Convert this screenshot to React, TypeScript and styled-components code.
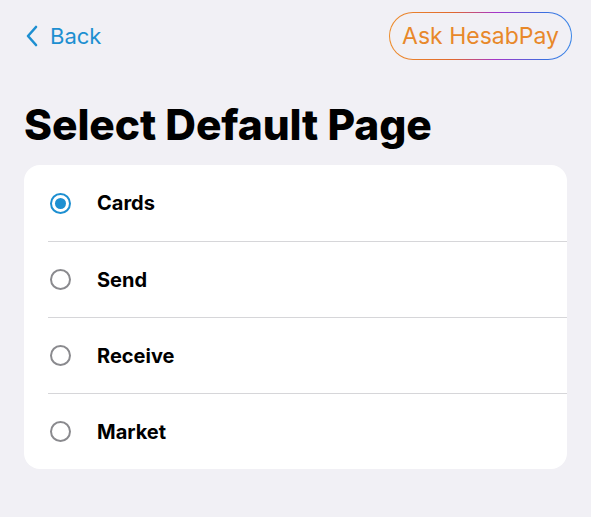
import styled, { createGlobalStyle } from 'styled-components'

const GlobalStyle = createGlobalStyle`
  html, body {
    margin: 0;
    padding: 0;
    background: #f1f0f5;
  }
  body {
    font-family: Inter, 'Liberation Sans', Arial, sans-serif;
  }
`

const options = ['Cards', 'Send', 'Receive', 'Market']

const App: React.FC = () => {
  const selected = 'Cards'

  return (
    <>
      <GlobalStyle />
      <Page>
        <TopBar>
          <BackButton>
            <svg width="14" height="22" viewBox="0 0 14 22" fill="none">
              <path d="M11 2 L3 11 L11 20" stroke="#1d8fd1" strokeWidth="2.6" strokeLinecap="round" strokeLinejoin="round" />
            </svg>
            <span>Back</span>
          </BackButton>
          <AskButton>Ask HesabPay</AskButton>
        </TopBar>
        <Title>Select Default Page</Title>
        <Card>
          {options.map((opt) => (
            <Row key={opt}>
              <Radio $checked={opt === selected} />
              <Label>{opt}</Label>
            </Row>
          ))}
        </Card>
      </Page>
    </>
  )
}

const Page = styled.div`
  width: 591px;
  height: 517px;
  box-sizing: border-box;
  padding: 12px 24px 0 24px;
  background: #f1f0f5;
`

const TopBar = styled.div`
  display: flex;
  align-items: center;
  justify-content: space-between;
  height: 48px;
  margin-right: -5px;
`

const BackButton = styled.div`
  display: flex;
  align-items: center;
  gap: 11px;
  color: #1d8fd1;
  font-size: 22px;
  svg {
    margin-left: 1px;
  }
`

const AskButton = styled.div`
  height: 48px;
  box-sizing: border-box;
  padding: 0 12px;
  display: flex;
  align-items: center;
  border-radius: 24px;
  border: 1.5px solid transparent;
  background:
    linear-gradient(#f1f0f5, #f1f0f5) padding-box,
    linear-gradient(90deg, #ee8d2b 0%, #e0682e 35%, #a634c9 58%, #3b6fe0 85%, #3a86e8 100%) border-box;
  color: #e8882a;
  font-size: 23px;
`

const Title = styled.h1`
  margin: 40px 0 15px 0;
  font-size: 42.5px;
  font-weight: 800;
  letter-spacing: -0.1px;
  color: #000;
  line-height: 50px;
`

const Card = styled.div`
  background: #fff;
  border-radius: 16px;
  width: 543px;
  overflow: hidden;
`

const Row = styled.div`
  display: flex;
  align-items: center;
  gap: 26px;
  height: 76px;
  margin-left: 24px;
  padding-left: 2px;
  box-sizing: border-box;
  & + & {
    border-top: 1px solid #d6d6d9;
  }
`

const Radio = styled.span<{ $checked: boolean }>`
  width: 21px;
  height: 21px;
  box-sizing: border-box;
  border-radius: 50%;
  border: 2px solid ${(p) => (p.$checked ? '#1d8fd1' : '#8a8a8e')};
  display: flex;
  align-items: center;
  justify-content: center;
  &::after {
    content: '';
    width: 11px;
    height: 11px;
    border-radius: 50%;
    background: ${(p) => (p.$checked ? '#1d8fd1' : 'transparent')};
  }
`

const Label = styled.span`
  font-size: 20px;
  font-weight: 700;
  color: #000;
`

export default App
